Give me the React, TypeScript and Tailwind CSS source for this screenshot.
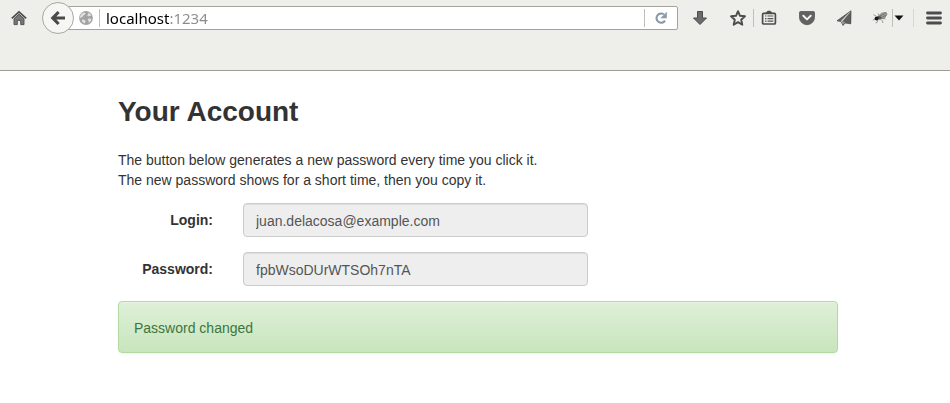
import type { ReactNode } from "react";

function ToolButton({ label, className, children }: { label: string; className: string; children: ReactNode }) {
  return (
    <button type="button" aria-label={label} className={`flex h-9 shrink-0 items-center justify-center ${className}`}>
      {children}
    </button>
  );
}

function Separator({ className = "" }: { className?: string }) {
  return <span className={`h-[18px] w-px shrink-0 bg-[#c0c0ba] ${className}`} />;
}

function HomeIcon() {
  return (
    <svg width="16" height="16" viewBox="0 0 16 16">
      <path d="M.8 8.400 8 1.900l7.200 6.500" fill="none" stroke="#4c4c4c" strokeWidth="1.700" />
      <path d="M3 8.600 8 4.200l5 4.400V14.600H9.700v-4.200H6.300v4.200H3z" fill="#777" stroke="#4c4c4c" strokeWidth=".9" />
    </svg>
  );
}

function BackIcon() {
  return (
    <svg width="16" height="16" viewBox="0 0 16 16">
      <path d="M8.6 2 2.8 8l5.8 6M3.4 8H15" fill="none" stroke="#4a4a4a" strokeWidth="3.2" />
    </svg>
  );
}

function GlobeIcon() {
  return (
    <svg width="14" height="14" viewBox="0 0 14 14" className="shrink-0">
      <circle cx="7" cy="7" r="6.9" fill="#a3a3a3" />
      <path d="M2.200 3 4.600 1.600l2.200.6-.8 1.400-1.800.8-.6 1.600L2 6.600l-.9.800V5.600zM9.400 1.600l1.900 1.200 1.200 2.200-1.700-.3-1.500.7-1.100-.8.900-1.300zM3 8.400l2.300.3 1.300 1.400-.7 2.200-1.900-.6-1.200-1.900zM9.600 7.600l2-.1.900 1.300-1.300 2.300-1.500.5-.3-2-.9-1.100z" fill="#e0e0e0" />
    </svg>
  );
}

function ReloadIcon() {
  return (
    <svg width="14" height="14" viewBox="0 0 14 14">
      <path d="M9.800 3.400A4.600 4.600 0 1 0 11 9.600" fill="none" stroke="#8a9aaa" strokeWidth="2.100" />
      <path d="M12.800.8v6.400H6.400z" fill="#8a9aaa" />
    </svg>
  );
}

function DownloadIcon() {
  return (
    <svg width="16" height="16" viewBox="0 0 16 16">
      <path d="M5.500 1.500h5V8h4L8 14.500 1.500 8h4z" fill="#6b6b6b" stroke="#4c4c4c" strokeLinejoin="round" />
    </svg>
  );
}

function StarIcon() {
  return (
    <svg width="18" height="18" viewBox="0 0 18 18">
      <path d="m9 2.200 2 4.600 5 .5-3.800 3.400 1.100 5L9 13.100l-4.300 2.600 1.100-5L2 7.300l5-.5z" fill="none" stroke="#4c4c4c" strokeWidth="1.900" strokeLinejoin="round" />
    </svg>
  );
}

function ClipboardIcon() {
  return (
    <svg width="16" height="16" viewBox="0 0 16 16">
      <path d="M3.800 3.400 6.800.8h2.400l3 2.600z" fill="#4c4c4c" />
      <rect x="1.600" y="3.400" width="12.800" height="10.600" rx="1" fill="#eeeeea" stroke="#4c4c4c" strokeWidth="1.700" />
      <path d="M4 6h1.500M6.500 6H12.300M4 8.600h1.500M6.500 8.600H12.300M4 11.200h1.500M6.500 11.200H12.300" stroke="#555" strokeWidth="1.200" />
    </svg>
  );
}

function PocketIcon() {
  return (
    <svg width="16" height="16" viewBox="0 0 16 16">
      <path d="M1.500 1.500h13a1 1 0 0 1 1 1V7.500a7.500 7.200 0 0 1-15 0V2.500a1 1 0 0 1 1-1z" fill="#626262" stroke="#4c4c4c" strokeWidth=".7" />
      <path d="m4.300 5.800 3.700 3.600 3.700-3.600" fill="none" stroke="#f4f4f2" strokeWidth="2" strokeLinecap="round" strokeLinejoin="round" />
    </svg>
  );
}

function PlaneIcon() {
  return (
    <svg width="16" height="16" viewBox="0 0 16 16">
      <path d="M15 .8 1 10.800l4 .7z" fill="#666" />
      <path d="M15 .8 6.200 11.500l.8 4 2-2.600 6 .9z" fill="#606060" />
      <path d="M14.600 1.500 5.200 11.200l1.400 3.800" fill="none" stroke="#deded9" strokeWidth=".7" />
      <path d="M15 .8 1 10.800l4 .7 2 4 2-2.600 5.700.9z" fill="none" stroke="#4c4c4c" strokeWidth=".8" />
      <path d="m7.500 11.800 1.200.6-1.100 1.600z" fill="#eeeeea" />
    </svg>
  );
}

function FlyIcon() {
  return (
    <svg width="16" height="14" viewBox="0 0 16 14">
      <path d="M4 5 1.500 3.800M3.500 8 .8 9M6 9l-1 2.500-1.500.5M9 8.500l1.500 1.500.5 2M11 7.500l2.500.5M7 4.500 6 2.500" fill="none" stroke="#888" strokeWidth=".8" />
      <path d="M6 5.500 9.500 2.200l4.600-.8.900 1.800L12.600 7l-5 1.200z" fill="#aaaaa5" stroke="#666" strokeWidth=".7" />
      <path d="m8 5 5.500-2.600M8.500 6.800l5.500-2.600" stroke="#555" strokeWidth=".7" />
      <ellipse cx="7" cy="6.800" rx="2.500" ry="1.800" fill="#555" />
      <circle cx="4.600" cy="7.600" r="2" fill="#1d1d1d" />
    </svg>
  );
}

function MenuIcon() {
  return (
    <svg width="16" height="14" viewBox="0 0 16 14">
      <path d="M1.500 2h13M1.500 7h13M1.500 12h13" stroke="#4c4c4c" strokeWidth="2.800" strokeLinecap="round" />
    </svg>
  );
}

function BrowserToolbar() {
  return (
    <header className="h-[71px] border-b border-[#9d9d94] bg-[#eeeeea]">
      <div className="flex h-9 items-center">
        <ToolButton label="Home" className="w-[38px]"><HomeIcon /></ToolButton>
        <button
          type="button"
          aria-label="Back"
          className="z-10 ml-1 flex size-8 shrink-0 items-center justify-center rounded-full border border-[#a9a99f] bg-[#f6f6f4]"
        >
          <BackIcon />
        </button>
        <div className="-ml-4 flex h-6 min-w-0 flex-1 items-center rounded-r-xs border border-[#a3a399] bg-white pl-5">
          <GlobeIcon />
          <Separator className="mx-1.5 h-4" />
          <input
            type="text"
            aria-label="Address"
            defaultValue="localhost:1234"
            className="min-w-0 flex-1 bg-[linear-gradient(to_right,#000_64px,#8b8b8b_64px)] bg-clip-text font-['Noto_Sans',sans-serif] text-[15px] leading-5 text-transparent outline-none"
          />
          <Separator className="h-4" />
          <button type="button" aria-label="Reload" className="flex h-5 w-8 shrink-0 items-center justify-center">
            <ReloadIcon />
          </button>
        </div>
        <ToolButton label="Downloads" className="w-11"><DownloadIcon /></ToolButton>
        <ToolButton label="Bookmark this page" className="w-[31px]"><StarIcon /></ToolButton>
        <Separator />
        <ToolButton label="Show bookmarks" className="w-[30px]"><ClipboardIcon /></ToolButton>
        <ToolButton label="Save to Pocket" className="w-[45px]"><PocketIcon /></ToolButton>
        <ToolButton label="Share" className="w-[30px]"><PlaneIcon /></ToolButton>
        <ToolButton label="Firebug" className="w-[33px] pl-2"><FlyIcon /></ToolButton>
        <Separator />
        <ToolButton label="Firebug options" className="w-3">
          <svg width="10" height="6" viewBox="0 0 10 6"><path d="M.5.500h9L5 5.500z" fill="#111" /></svg>
        </ToolButton>
        <Separator className="ml-2 h-8 bg-[#d6d6d1]" />
        <ToolButton label="Menu" className="w-9 pl-1"><MenuIcon /></ToolButton>
      </div>
    </header>
  );
}

function Field({ id, label, value }: { id: string; label: string; value: string }) {
  return (
    <div className="mb-[15px] flex items-center">
      <label htmlFor={id} className="w-[95px] shrink-0 text-right font-bold">{label}</label>
      <input
        id={id}
        type="text"
        readOnly
        value={value}
        className="ml-[30px] h-[34px] w-full max-w-[345px] min-w-0 rounded border border-[#ccc] bg-[#eee] px-3 pt-0.5 text-[#555] shadow-[inset_0_1px_1px_rgba(0,0,0,0.075)] outline-none"
      />
    </div>
  );
}

export default function App() {
  return (
    <div className="min-h-screen bg-white font-['Liberation_Sans',Arial,sans-serif] text-sm leading-5 text-[#333]">
      <BrowserToolbar />
      <main className="pl-1.5">
        <div className="mx-auto max-w-[720px] pt-6">
          <h1 className="mb-[21px] text-[28px] leading-[34px] font-bold">Your Account</h1>
          <p className="mb-[13px]">
            The button below generates a new password every time you click it.
            <br />
            The new password shows for a short time, then you copy it.
          </p>
          <form>
            <Field id="login" label="Login:" value="juan.delacosa@example.com" />
            <Field id="password" label="Password:" value="fpbWsoDUrWTSOh7nTA" />
          </form>
          <div
            role="alert"
            className="rounded border border-[#b2dba1] bg-linear-to-b from-[#dff0d8] to-[#c8e5bc] px-[15px] pt-4 pb-3.5 text-[#3c763d] shadow-[inset_0_1px_0_rgba(255,255,255,0.25),0_1px_2px_rgba(0,0,0,0.05)]"
          >
            Password changed
          </div>
        </div>
      </main>
    </div>
  );
}
